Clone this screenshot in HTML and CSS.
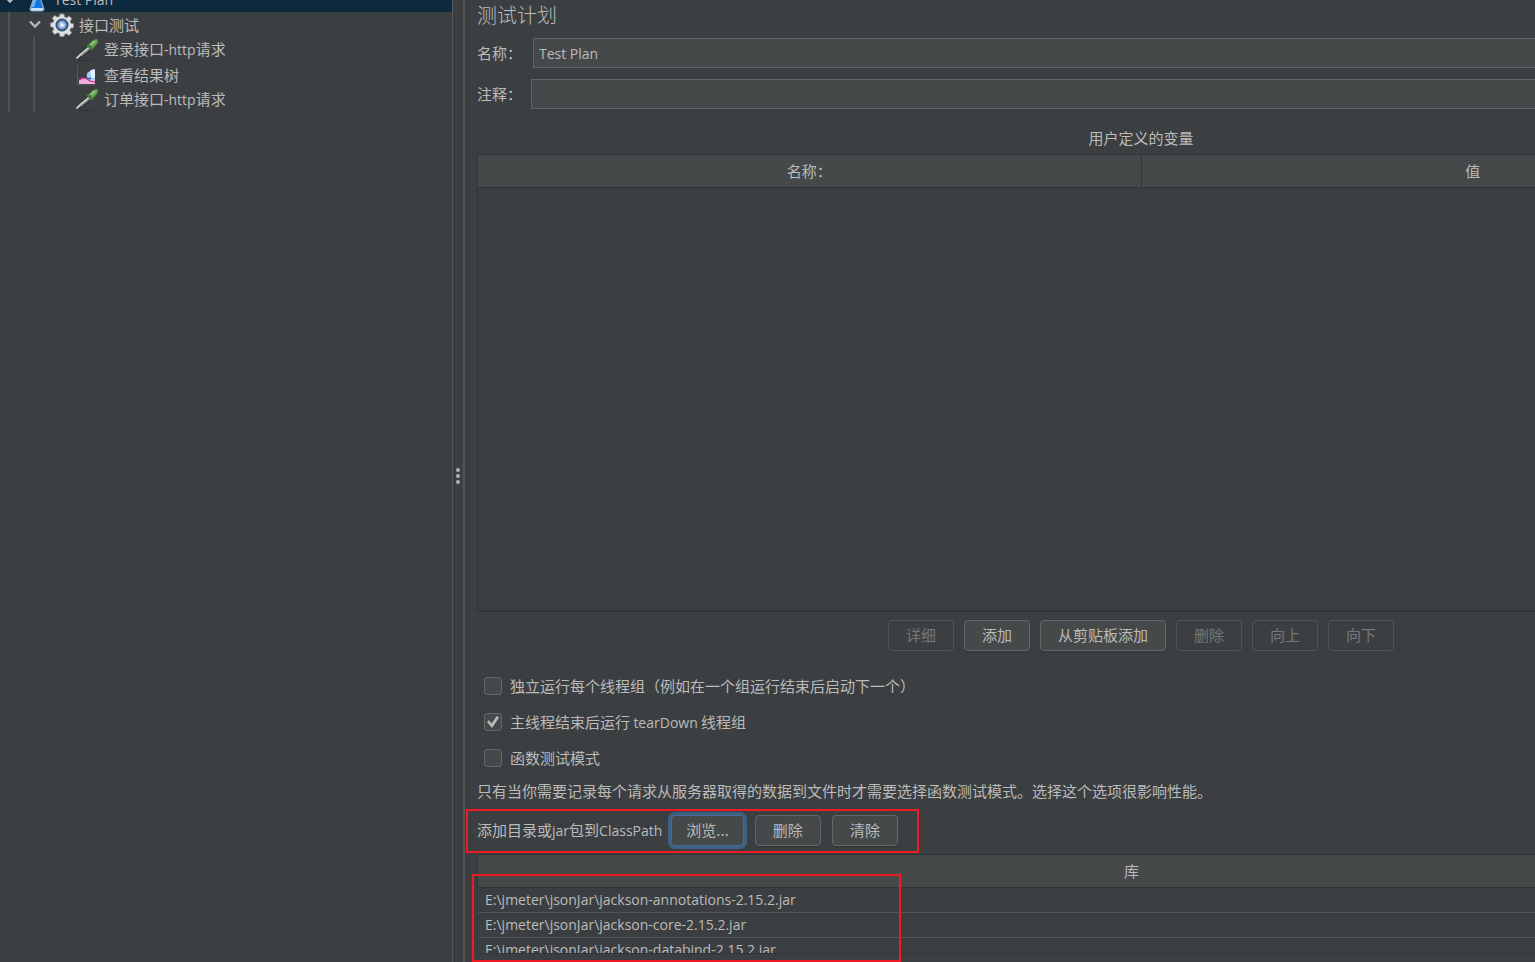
FILE: index.html
```html
<!DOCTYPE html>
<html lang="zh-CN">
<head>
<meta charset="utf-8">
<title>测试计划</title>
<link rel="stylesheet" href="styles.css">
</head>
<body>
<svg class="defs" aria-hidden="true">
  <symbol id="chevron" viewBox="0 0 14 14"><path d="M2 3.500 7 8.500 12 3.500" fill="none" stroke="#b4b6b8" stroke-width="2.400"/></symbol>
  <symbol id="pipette" viewBox="0 0 24 24">
    <path d="M3 22.500h16" stroke="#2f3133"/>
    <path d="M1.500 20.500 3.500 16.500 12.500 8.500l3.500 3L7 19z" fill="#555956" stroke="#292c2b"/>
    <path d="m1.500 20.500 3.500-3.500 9-7.500" fill="none" stroke="#c9ccc9" stroke-width="1.800"/>
    <path d="m6.500 17.500 8-6.500" stroke="#8e938e" stroke-width="1.200" stroke-dasharray="2 1"/>
    <path d="m12.500 6.500 5 5" stroke="#3f7d30" stroke-width="3"/>
    <path d="m13.500 6.500 3.500-3.500 4-2 2 .5-.5 3.500-4.500 5.500z" fill="#65a554" stroke="#397531" stroke-width=".7"/>
    <path d="m16 6.500 4-3.500" stroke="#a3cf90" stroke-width="1.500"/>
  </symbol>
</svg>
<div class="app">
  <nav class="tree" aria-label="测试计划树">
    <ul class="level root">
      <li>
        <div class="row selected">
          <svg class="arrow"><use href="#chevron"/></svg>
          <svg class="icon" viewBox="0 0 24 24"><path d="M9 1h6v8l4 12q0 2-2 2H7q-2 0-2-2L9 9z" fill="#dcecf8" stroke="#8ba8c0"/><path d="M8.500 12h7l2.500 8q0 1.500-1.500 1.500h-9q-1.500 0-1.500-1.500z" fill="#1976dc"/><path d="m8.500 12-2 7h2.500l2-7z" fill="#70b9ff"/><path d="M6.500 21h11" stroke="#c9e4fb" stroke-width="2"/></svg>
          <span class="latin">Test Plan</span>
        </div>
        <ul class="level first">
          <li>
            <div class="row">
              <svg class="arrow"><use href="#chevron"/></svg>
              <svg class="icon" viewBox="0 0 24 24"><path d="M10 1h4l.6 3 1.900.8 2.700-1.800 2.600 2.700-1.700 2.700.8 1.900 2.600.5v3.800l-2.800.6-.8 2 1.800 2.600-2.700 2.600-2.700-1.700-1.900.8L14 23.500h-4l-.6-3-1.900-.8-2.700 1.700L2.200 18.800l1.600-2.600-.8-2L.5 13.800V10l2.600-.6.8-1.900L2.200 5.200l2.600-2.600 2.700 1.600 1.900-.7z" fill="#dfdfdd" stroke="#8d8f90" stroke-width=".7"/><circle cx="12" cy="12" r="5.700" fill="#5f82b4" stroke="#2e4d7d" stroke-width="1.600"/><circle cx="12" cy="12" r="3.500" fill="#a3bbdc"/><path d="m10.500 9.500 4.500 2.500-4.500 2.500z" fill="#e8effa"/></svg>
              <span>接口测试</span>
            </div>
            <ul class="level second">
              <li class="row"><svg class="icon"><use href="#pipette"/></svg><span>登录接口<span class="latin">-http</span>请求</span></li>
              <li class="row"><svg class="icon" viewBox="0 0 24 24"><path d="M2.500 2v20H21" fill="none" stroke="#55585b"/><path d="M4 21v-4l3-2 4 .5 3-2 6 1.500v6z" fill="#efafd8"/><path d="M12 14q-1-3 1-5 2 0 3-2l4-1v12l-5-1z" fill="#aacdf2"/><path d="m15 8 3-1.500 2 1v7l-3 1z" fill="#e3f1ff"/><path d="m4 17 4-2 3 .5 4 2.500 5 1" fill="none" stroke="#dc278f" stroke-width="1.200"/><path d="m11 14 3 2 2-1" stroke="#3263bb" stroke-width="1.500" fill="none"/></svg><span>查看结果树</span></li>
              <li class="row"><svg class="icon"><use href="#pipette"/></svg><span>订单接口<span class="latin">-http</span>请求</span></li>
            </ul>
          </li>
        </ul>
      </li>
    </ul>
  </nav>
  <div class="splitter"><i></i><i></i><i></i></div>
  <main class="panel">
    <form class="content">
      <h1>测试计划</h1>
      <div class="field"><label for="name">名称：</label><input id="name" class="latin" type="text" value="Test Plan"></div>
      <div class="field comment"><label for="comment">注释：</label><input id="comment" type="text"></div>
      <h2>用户定义的变量</h2>
      <div class="variables">
        <table><thead><tr><th>名称：</th><th>值</th></tr></thead></table>
      </div>
      <div class="actions">
        <button type="button" disabled>详细</button>
        <button type="button">添加</button>
        <button type="button">从剪贴板添加</button>
        <button type="button" disabled>删除</button>
        <button type="button" disabled>向上</button>
        <button type="button" disabled>向下</button>
      </div>
      <div class="options">
        <label><input type="checkbox">独立运行每个线程组（例如在一个组运行结束后启动下一个）</label>
        <label><input type="checkbox" checked><span>主线程结束后运行 <span class="latin">tearDown</span> 线程组</span></label>
        <label><input type="checkbox">函数测试模式</label>
      </div>
      <p>只有当你需要记录每个请求从服务器取得的数据到文件时才需要选择函数测试模式。选择这个选项很影响性能。</p>
      <div class="classpath">
        <span class="caption">添加目录或<span class="latin">jar</span>包到<span class="latin">ClassPath</span></span>
        <button type="button" class="focused">浏览...</button>
        <button type="button">删除</button>
        <button type="button">清除</button>
        <div class="mark"></div>
      </div>
      <div class="library">
        <div class="viewport">
          <table>
            <thead><tr><th>库</th></tr></thead>
            <tbody class="latin">
              <tr><td>E:\jmeter\jsonJar\jackson-annotations-2.15.2.jar</td></tr>
              <tr><td>E:\jmeter\jsonJar\jackson-core-2.15.2.jar</td></tr>
              <tr><td>E:\jmeter\jsonJar\jackson-databind-2.15.2.jar</td></tr>
            </tbody>
          </table>
        </div>
        <div class="mark"></div>
      </div>
    </form>
  </main>
</div>
</body>
</html>
```
FILE: styles.css
```css
* { box-sizing: border-box; }

body {
  margin: 0;
  background: #3c3f41;
  color: #bbb;
  font: 15px/24px "Noto Sans CJK SC", sans-serif;
}

.defs { position: absolute; width: 0; height: 0; }

.latin { font-family: "Open Sans", "Noto Sans CJK SC", sans-serif; font-size: 14px; }

.app { display: flex; height: 100vh; overflow: hidden; }

/* Tree */
.tree { flex: 0 0 453px; border-right: 1px solid #555; overflow: hidden; }
.level { list-style: none; margin: 0; padding: 0; }
.root { margin-top: -13px; }
.first { margin-left: 8px; border-left: 2px solid #505355; }
.second { margin-left: 23px; border-left: 2px solid #505355; }
.row { display: flex; align-items: center; height: 25px; white-space: nowrap; }
.row.selected { background: #0d293e; padding-left: 3px; }
.first .row { padding-left: 18px; }
.second .row { padding-left: 40px; }
.arrow { width: 14px; height: 14px; margin-right: 8px; flex: none; }
.icon { width: 24px; height: 24px; margin-right: 5px; flex: none; }

.splitter {
  flex: 0 0 12px;
  display: flex;
  flex-direction: column;
  align-items: center;
  justify-content: center;
  gap: 2px;
  padding-bottom: 10px;
  border-right: 2px solid #555;
}
.splitter i { width: 4px; height: 4px; border-radius: 50%; background: #afb1b3; }

/* Editor panel: the form is wider than the visible area */
.panel { flex: 1; min-width: 0; overflow: hidden; padding-left: 12px; }
.content { display: flex; flex-direction: column; height: 100%; margin-right: -270px; padding-bottom: 8px; }

h1 { margin: 0 0 8px; font-size: 20px; line-height: 30px; font-weight: 300; }
h2 { margin: 16px 0 3px; font-size: 15px; line-height: 26px; font-weight: 400; text-align: center; }

.field { display: flex; align-items: center; }
.field label { flex: 0 0 56px; }
.field input {
  flex: 1;
  min-width: 0;
  height: 30px;
  padding: 0 5px;
  border: 1px solid #646464;
  background: #45494a;
  color: #bbb;
  outline: 0;
}
.comment { margin-top: 11px; }
.comment label { flex-basis: 54px; }

table { width: 100%; border-collapse: collapse; table-layout: fixed; }
th { height: 32px; padding: 0; background: #45494a; border-bottom: 1px solid #323537; font-weight: 400; }
th + th { border-left: 1px solid #323537; }
.variables { flex: 1; min-height: 0; border: 1px solid #323537; border-bottom-width: 2px; }

button {
  height: 31px;
  min-width: 65px;
  padding: 0 17px 1px;
  border: 1px solid #646768;
  border-radius: 4px;
  background: #45494a;
  color: #bbb;
  font: inherit;
  box-shadow: 0 2px 0 #37393b;
}
button:disabled { background: none; border-color: #525557; color: #777; box-shadow: none; }
button.focused { padding: 0 14px 1px; border-color: #466d94; box-shadow: 0 0 0 3px #3d6185; }

.actions { display: flex; justify-content: center; gap: 10px; margin: 8px 0 17px; }

.options { display: flex; flex-direction: column; align-items: flex-start; gap: 12px; padding: 6px 0 0 7px; }
.options label { display: flex; align-items: center; gap: 8px; height: 24px; }
.options input {
  appearance: none;
  display: grid;
  place-items: center;
  width: 18px;
  height: 18px;
  margin: 0;
  border: 1px solid #646768;
  border-radius: 3px;
  background: #45494a;
}
.options input:checked::before {
  content: "";
  width: 12px;
  height: 12px;
  background: #bbb;
  clip-path: polygon(0 50%, 16% 36%, 38% 62%, 82% 0, 100% 12%, 42% 100%);
}

p { margin: 9px 0 12px; }

.classpath { position: relative; display: flex; align-items: center; gap: 11px; margin-bottom: 8px; }
.caption { white-space: nowrap; margin-right: -2px; }

.library { position: relative; }
.viewport { height: 100px; overflow: hidden; border: 1px solid #323537; border-right: 0; }
.library td { height: 25px; padding: 0 7px; line-height: 24px; border-bottom: 1px solid #535658; }
.library th { padding-right: 20px; }

.mark { position: absolute; border: 2px solid #ed1c24; pointer-events: none; }
.classpath .mark { top: -6px; bottom: -7px; left: -11px; width: 453px; }
.library .mark { top: 20px; bottom: -8px; left: -5px; width: 429px; }
```
